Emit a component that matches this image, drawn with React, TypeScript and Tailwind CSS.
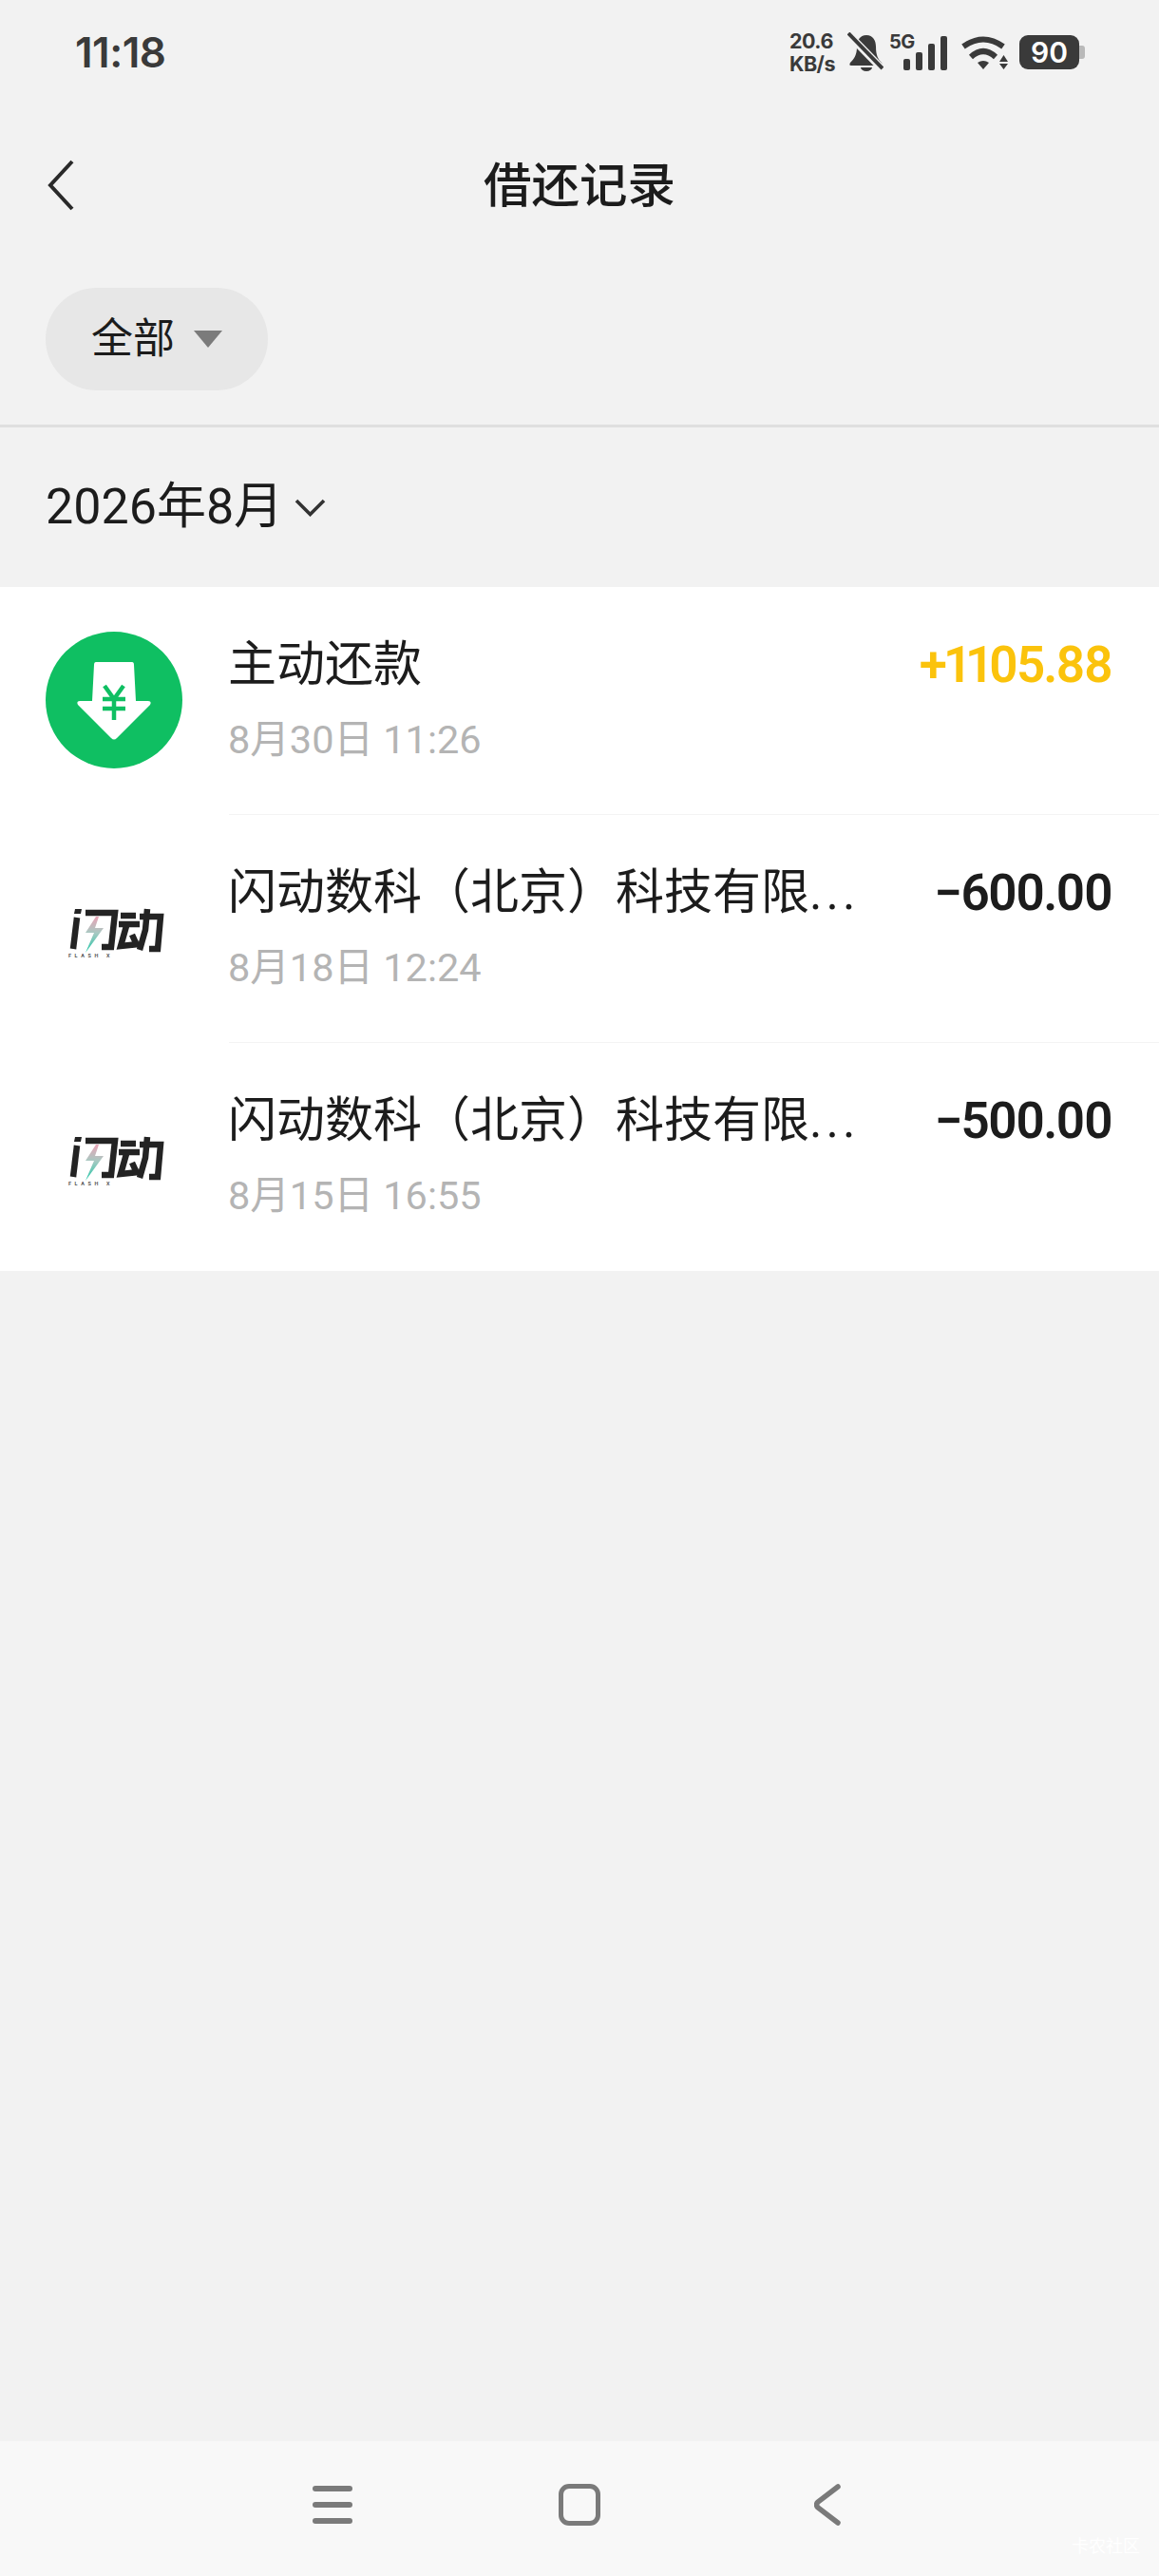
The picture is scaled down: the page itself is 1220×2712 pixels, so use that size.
const CJK = "font-['Roboto','Noto_Sans_CJK_SC',sans-serif]";

interface RecordItem {
  title: string;
  clipped?: boolean;
  time: string;
  amount: string;
  kind: "repay" | "loan";
}

const RECORDS: RecordItem[] = [
  { title: "主动还款", time: "8月30日 11:26", amount: "+1105.88", kind: "repay" },
  { title: "闪动数科（北京）科技有限", clipped: true, time: "8月18日 12:24", amount: "−600.00", kind: "loan" },
  { title: "闪动数科（北京）科技有限", clipped: true, time: "8月15日 16:55", amount: "−500.00", kind: "loan" },
];

const RepayIcon = () => (
  <svg viewBox="0 0 144 144" className="h-[144px] w-[144px]">
    <circle cx="72" cy="72" r="72" fill="#0fbf62" />
    <path
      d="M53 32h38q2 0 2 3l2 38h13q4 0 2 4L75 112q-3 3-6 0L34 77q-2-4 2-4h13l2-38q0-3 2-3z"
      fill="#fff"
    />
    <path
      d="M62 57l10 14 10-14M60 71h24M60 81h24M72 70v23"
      fill="none"
      stroke="#0fbf62"
      strokeWidth="4.5"
    />
  </svg>
);

const FlashLogo = ({ id }: { id: string }) => (
  <svg viewBox="0 0 144 144" className="h-[144px] w-[144px]">
    <defs>
      <linearGradient id={id} x1="0" y1="0" x2="0" y2="1">
        <stop offset="0" stopColor="#e9a3b6" />
        <stop offset="0.45" stopColor="#a9c9c2" />
        <stop offset="1" stopColor="#22c7a8" />
      </linearGradient>
    </defs>
    <path d="M31 52h7l-1 5h-7z" fill="#232323" />
    <g fill="none" stroke="#232323" strokeWidth="6.5">
      <path d="M33 61l-4 33" />
      <path d="M42 56H73L69 92H59" />
      <path d="M79 59h16M77 68h22M85 70l-6 21 19-2M91 79l5 11" />
      <path d="M99 60h22l-3 34h-9M107 52l-2 22-6 21" />
    </g>
    <path d="M53 60L42 77h9l-9 21 19-26h-9l4-12z" fill={`url(#${id})`} />
    <text x="24" y="103" fontSize="5.5" letterSpacing="3.6" fill="#555" fontFamily="Roboto" fontWeight="700">
      FLASH X
    </text>
  </svg>
);

const SignalIcon = () => (
  <div className="relative mr-[14px] h-[42px] w-[61px]">
    <span className="absolute left-0 top-0 font-['Inter',sans-serif] text-[20px] font-bold leading-[20px] tracking-[-0.5px] text-[#3a3a3a]">
      5G
    </span>
    <svg viewBox="0 0 61 42" className="h-[42px] w-[61px]">
      <rect x="15" y="28" width="7" height="12" rx="2" fill="#3a3a3a" />
      <rect x="28" y="21" width="7" height="19" rx="2" fill="#3a3a3a" />
      <rect x="41" y="12" width="7" height="28" rx="2" fill="#3a3a3a" />
      <rect x="54" y="4" width="7" height="36" rx="2" fill="#3a3a3a" />
    </svg>
  </div>
);

const StatusBar = () => (
  <div className="flex h-[100px] items-center justify-between pl-[79px] pr-[78px] pt-[10px]">
    <span className="font-['Inter',sans-serif] text-[44px] font-semibold leading-none tracking-[-0.5px] text-[#3a3a3a]">
      11:18
    </span>
    <div className="flex items-center">
      <div className="mr-[13px] flex flex-col font-['Inter',sans-serif] text-[21.5px] font-bold leading-[24px] tracking-[-0.5px] text-[#3a3a3a]">
        <span>20.6</span>
        <span>KB/s</span>
      </div>
      <svg viewBox="0 0 38 42" className="mr-[6px] h-[42px] w-[38px]">
        <path
          d="M20 3c-7 0-10 6-10 12 0 9-3 13-7 17-1 2-1 3 1 3h31c2 0 2-1 1-3-4-4-6-8-6-17 0-6-3-12-10-12zM14 37a6 4 0 0 0 12 0z"
          fill="#3a3a3a"
        />
        <path d="M2 3l36 37" stroke="#f2f2f2" strokeWidth="8" />
        <path d="M1 1l36 37" stroke="#3a3a3a" strokeWidth="4" />
      </svg>
      <SignalIcon />
      <svg viewBox="0 0 50 35" className="mr-[12px] h-[35px] w-[50px]">
        <path d="M3 11Q24-4 45 11" fill="none" stroke="#3a3a3a" strokeWidth="6" />
        <path d="M11 22Q24 10 37 22" fill="none" stroke="#3a3a3a" strokeWidth="6" />
        <path d="M18 28q6-4 12 0l-6 7z" fill="#3a3a3a" />
        <path d="M41 27l4.500-7 4.500 7zM41 29h9l-4.500 6z" fill="#3a3a3a" />
      </svg>
      <div className="flex items-center">
        <div className="flex h-[36px] w-[63px] items-center justify-center rounded-[9px] bg-[#3a3a3a] font-['Inter',sans-serif] text-[30px] font-semibold leading-none text-white">
          90
        </div>
        <div className="h-[14px] w-[6px] rounded-r-[3px] bg-[#b9b9b9]" />
      </div>
    </div>
  </div>
);

const RecordRow = ({ item, index, last }: { item: RecordItem; index: number; last: boolean }) => (
  <div className="flex h-[240px] bg-white">
    <div className="w-[241px] shrink-0 pl-[48px] pt-[47px]">
      {item.kind === "repay" ? <RepayIcon /> : <FlashLogo id={`flash-bolt-${index}`} />}
    </div>
    <div className={`flex min-w-0 flex-1 justify-between pr-[50px] ${last ? "" : "border-b border-[#f3f3f3]"}`}>
      <div className="-ml-[1px] pt-[57px]">
        <div className={`${CJK} text-[51px] leading-[50px] text-[#1c1c1c] [text-spacing-trim:space-all]`}>
          {item.title}
          {item.clipped && <span className="tracking-[4px]">...</span>}
        </div>
        <div className={`${CJK} mt-[32px] text-[41.5px] leading-[44px] text-[#b4b4b4]`}>{item.time}</div>
      </div>
      <div
        className={`pt-[57px] font-['Roboto',sans-serif] text-[53px] font-semibold leading-[50px] tracking-[-2px] proportional-nums ${
          item.kind === "repay" ? "text-[#fbc30c]" : "text-[#1c1c1c]"
        }`}
      >
        {item.amount}
      </div>
    </div>
  </div>
);

export default function App() {
  return (
    <div className="relative flex h-[2712px] w-[1220px] flex-col overflow-hidden bg-[#f2f2f2]">
      <StatusBar />

      <div className="relative flex h-[190px] items-center justify-center pt-[2px]">
        <svg viewBox="0 0 28 54" className="absolute left-[50px] top-[68px] h-[54px] w-[28px]">
          <path d="M26 2L3 27l23 25" fill="none" stroke="#2a2a2a" strokeWidth="4" />
        </svg>
        <h1 className={`${CJK} text-[50.5px] font-medium leading-none text-[#1c1c1c]`}>借还记录</h1>
      </div>

      <div className="border-b-[3px] border-[#dfdfdf] px-[48px] pb-[36px] pt-[13px]">
        <div className="flex h-[108px] w-[234px] items-center rounded-full bg-[#e7e7e7] pl-[48px]">
          <span className={`${CJK} text-[44px] leading-none text-[#1c1c1c]`}>全部</span>
          <svg viewBox="0 0 30 18" className="ml-[20px] h-[18px] w-[30px]">
            <path d="M0 0h30L15 18z" fill="#7b7b7b" />
          </svg>
        </div>
      </div>

      <div className="flex h-[168px] items-center px-[48px]">
        <span className={`${CJK} text-[52px] leading-none text-[#1c1c1c]`}>2026年8月</span>
        <svg viewBox="0 0 33 19" className="ml-[12px] h-[19px] w-[33px]">
          <path d="M2 2l14.500 14.500L31 2" fill="none" stroke="#333" strokeWidth="3.6" />
        </svg>
      </div>

      <div className="flex flex-col">
        {RECORDS.map((item, i) => (
          <RecordRow key={i} item={item} index={i} last={i === RECORDS.length - 1} />
        ))}
      </div>

      <div className="flex-1" />

      <div className="flex h-[142px] items-center bg-[#f8f8f8] pb-[8px] pl-[329px]">
        <div className="flex w-[42px] flex-col gap-[11px]">
          <div className="h-[6px] rounded-full bg-[#7a7a7a]" />
          <div className="h-[6px] rounded-full bg-[#7a7a7a]" />
          <div className="h-[6px] rounded-full bg-[#7a7a7a]" />
        </div>
        <div className="ml-[217px] h-[44px] w-[44px] rounded-[11px] border-[5px] border-[#7a7a7a]" />
        <svg viewBox="0 0 28 44" className="ml-[225px] h-[44px] w-[28px]">
          <path
            d="M25 3L4 19q-3 3 0 6l21 16"
            fill="none"
            stroke="#7a7a7a"
            strokeWidth="5.500"
            strokeLinecap="round"
          />
        </svg>
      </div>

      {/* forum watermark, white on the nav bar */}
      <span className={`${CJK} absolute bottom-[22px] right-[20px] text-[18px] leading-none text-white`}>卡农社区</span>
    </div>
  );
}
